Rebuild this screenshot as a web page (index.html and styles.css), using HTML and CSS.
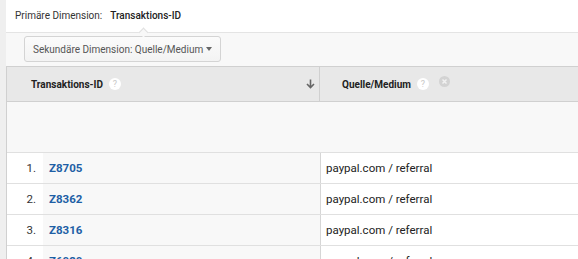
FILE: index.html
```html
<!DOCTYPE html>
<html lang="de">
<head>
    <meta charset="UTF-8">
    <title>Transaktionen</title>
    <link rel="stylesheet" href="styles.css">
</head>
<body>
    <div class="report">
        <div class="primary">
            <span class="label">Primäre Dimension:</span>
            <span class="active">Transaktions-ID</span>
        </div>
        <div class="secondary">
            <div class="dropdown">Sekundäre Dimension: Quelle/Medium <span class="caret"></span></div>
        </div>
        <div class="table">
            <div class="head">
                <div class="th first">
                    <span>Transaktions-ID</span>
                    <span class="help">?</span>
                    <svg class="sort" width="9" height="10" viewBox="0 0 9 10">
                        <path d="M4.5 0.5 V8.5 M1 5 L4.5 8.5 L8 5" fill="none" stroke="#666" stroke-width="1.6"/>
                    </svg>
                </div>
                <div class="th second">
                    <span>Quelle/Medium</span>
                    <span class="help">?</span>
                    <svg class="remove" width="11" height="11" viewBox="0 0 11 11">
                        <circle cx="5.5" cy="5.5" r="5.5" fill="#d3d3d3"/>
                        <path d="M3.5 3.5 L7.5 7.5 M7.5 3.5 L3.5 7.5" stroke="#f2f2f2" stroke-width="1.5"/>
                    </svg>
                </div>
            </div>
            <div class="spacer"></div>
            <div class="row">
                <div class="num">1.</div>
                <div class="id">Z8705</div>
                <div class="src">paypal.com / referral</div>
            </div>
            <div class="row">
                <div class="num">2.</div>
                <div class="id">Z8362</div>
                <div class="src">paypal.com / referral</div>
            </div>
            <div class="row">
                <div class="num">3.</div>
                <div class="id">Z8316</div>
                <div class="src">paypal.com / referral</div>
            </div>
            <div class="row">
                <div class="num">4.</div>
                <div class="id">Z6020</div>
                <div class="src">paypal.com / referral</div>
            </div>
        </div>
    </div>
</body>
</html>
```

FILE: styles.css
```css
* { box-sizing: border-box; }
body {
    margin: 0;
    background: #efefef;
    font-family: Roboto, "Liberation Sans", sans-serif;
    font-size: 10px;
    color: #222;
    overflow: hidden;
}
.report {
    margin-left: 6px;
    background: #fff;
    min-height: 100vh;
}
.primary {
    position: relative;
    display: flex;
    align-items: center;
    gap: 8px;
    height: 33px;
    padding: 0 0 1px 9px;
    border-bottom: 1px solid #e4e4e4;
    color: #333;
}
.primary .active { font-weight: 500; color: #222; }
.primary::after {
    content: "";
    position: absolute;
    left: 134px;
    bottom: -4px;
    width: 6px;
    height: 6px;
    background: #f8f8f8;
    border-top: 1px solid #e0e0e0;
    border-left: 1px solid #e0e0e0;
    transform: rotate(45deg);
}
.secondary {
    background: #f8f8f8;
    padding: 3px 0 4px 18px;
}
.dropdown {
    display: flex;
    align-items: center;
    justify-content: space-between;
    width: 197px;
    height: 26px;
    padding: 0 8px;
    white-space: nowrap;
    border: 1px solid #d4d4d4;
    border-radius: 3px;
    background: linear-gradient(#fbfbfb, #f3f3f3);
    color: #555;
}
.caret {
    border-left: 3.5px solid transparent;
    border-right: 3.5px solid transparent;
    border-top: 4px solid #666;
}
.table { border-left: 1px solid #d0d0d0; }
.head {
    display: flex;
    height: 36px;
    background: #e8e8e8;
    border-top: 1px solid #d0d0d0;
    border-bottom: 1px solid #d0d0d0;
    font-weight: 700;
    color: #222;
}
.th {
    display: flex;
    align-items: center;
}
.th.first {
    width: 313px;
    padding-left: 24px;
    border-right: 1px solid #d0d0d0;
}
.th.second {
    flex: 1;
    padding-left: 22px;
}
.help {
    width: 12px;
    height: 12px;
    margin-left: 6px;
    border-radius: 50%;
    background: #fff;
    color: #c8c8c8;
    font-size: 9px;
    font-weight: 400;
    line-height: 12px;
    text-align: center;
}
.sort {
    margin-left: auto;
    margin-right: 4px;
}
.remove {
    margin: -5px 0 0 10px;
}
.spacer {
    height: 51px;
    background: #f8f8f8;
    border-bottom: 1px solid #e0e0e0;
}
.row {
    display: flex;
    height: 31px;
    border-bottom: 1px solid #e0e0e0;
    font-size: 11.5px;
}
.num {
    width: 36px;
    padding-right: 7px;
    text-align: right;
    line-height: 30px;
    color: #333;
}
.id {
    width: 278px;
    padding-left: 6px;
    background: #f8f8f8;
    border-right: 1px solid #d6d6d6;
    line-height: 30px;
    font-weight: 700;
    color: #1e5fa5;
}
.src {
    flex: 1;
    padding-left: 5px;
    line-height: 30px;
    color: #222;
}
```
